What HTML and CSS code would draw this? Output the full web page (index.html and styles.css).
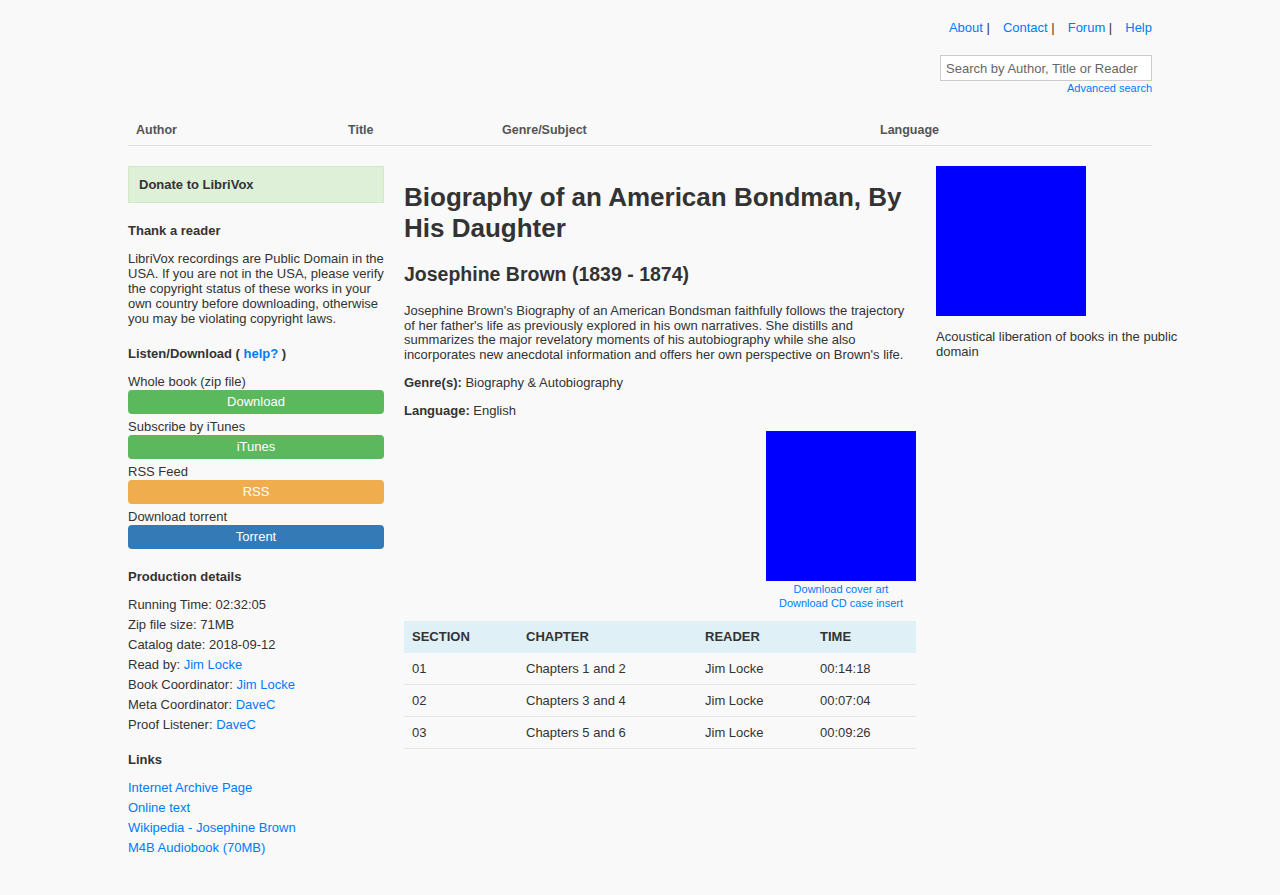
FILE: index.html
```html
<!DOCTYPE html>
<html lang="en">
<head>
<meta charset="utf-8">
<title>Biography of an American Bondman, By His Daughter - LibriVox</title>
<link rel="stylesheet" href="styles.css">
</head>
<body>
<div class="page">
  <header class="masthead">
    <ul class="toplinks">
      <li><a href="#">About</a> |</li>
      <li><a href="#">Contact</a> |</li>
      <li><a href="#">Forum</a> |</li>
      <li><a href="#">Help</a></li>
    </ul>
    <div class="search">
      <input class="search-input" type="text" placeholder="Search by Author, Title or Reader">
      <a class="adv" href="#">Advanced search</a>
    </div>
    <nav class="browse">
      <span class="b-author">Author</span>
      <span class="b-title">Title</span>
      <span class="b-genre">Genre/Subject</span>
      <span class="b-lang">Language</span>
    </nav>
  </header>

  <div class="content">
    <aside class="sidebar">
      <div class="donate">Donate to LibriVox</div>
      <h4 class="side-h first-h">Thank a reader</h4>
      <p class="side-p">LibriVox recordings are Public Domain in the USA. If you are not in the USA, please verify the copyright status of these works in your own country before downloading, otherwise you may be violating copyright laws.</p>
      <h4 class="side-h">Listen/Download ( <a href="#">help?</a> )</h4>
      <div class="dl">
        <div class="dl-item"><div class="dl-label">Whole book (zip file)</div><a class="btn btn-green" href="#">Download</a></div>
        <div class="dl-item"><div class="dl-label">Subscribe by iTunes</div><a class="btn btn-green" href="#">iTunes</a></div>
        <div class="dl-item"><div class="dl-label">RSS Feed</div><a class="btn btn-orange" href="#">RSS</a></div>
        <div class="dl-item"><div class="dl-label">Download torrent</div><a class="btn btn-blue" href="#">Torrent</a></div>
      </div>
      <h4 class="side-h prod-h">Production details</h4>
      <dl class="details">
        <dd>Running Time: 02:32:05</dd>
        <dd>Zip file size: 71MB</dd>
        <dd>Catalog date: 2018-09-12</dd>
        <dd>Read by: <a href="#">Jim Locke</a></dd>
        <dd>Book Coordinator: <a href="#">Jim Locke</a></dd>
        <dd>Meta Coordinator: <a href="#">DaveC</a></dd>
        <dd>Proof Listener: <a href="#">DaveC</a></dd>
      </dl>
      <h4 class="side-h links-h">Links</h4>
      <ul class="links">
        <li><a href="#">Internet Archive Page</a></li>
        <li><a href="#">Online text</a></li>
        <li><a href="#">Wikipedia - Josephine Brown</a></li>
        <li><a href="#">M4B Audiobook (70MB)</a></li>
      </ul>
    </aside>

    <main class="main">
      <h1 class="title">Biography of an American Bondman, By His Daughter</h1>
      <h2 class="author">Josephine Brown (1839 - 1874)</h2>
      <p class="desc">Josephine Brown's Biography of an American Bondsman faithfully follows the trajectory of her father's life as previously explored in his own narratives. She distills and summarizes the major revelatory moments of his autobiography while she also incorporates new anecdotal information and offers her own perspective on Brown's life.</p>
      <p class="meta"><b>Genre(s):</b> Biography &amp; Autobiography</p>
      <p class="meta"><b>Language:</b> English</p>
      <div class="cover-wrap">
        <div class="cover">
          <div class="cover-img"></div>
          <a href="#">Download cover art</a>
          <a href="#">Download CD case insert</a>
        </div>
      </div>
      <table class="chapters">
        <thead>
          <tr><th class="c1">Section</th><th class="c2">Chapter</th><th class="c3">Reader</th><th class="c4">Time</th></tr>
        </thead>
        <tbody>
          <tr><td>01</td><td>Chapters 1 and 2</td><td>Jim Locke</td><td>00:14:18</td></tr>
          <tr><td>02</td><td>Chapters 3 and 4</td><td>Jim Locke</td><td>00:07:04</td></tr>
          <tr><td>03</td><td>Chapters 5 and 6</td><td>Jim Locke</td><td>00:09:26</td></tr>
        </tbody>
      </table>
    </main>

    <aside class="right">
      <div class="logo-img"></div>
      <p class="tagline">Acoustical liberation of books in the public domain</p>
    </aside>
  </div>
</div>
</body>
</html>
```

FILE: styles.css
```css
* { box-sizing: border-box; }
html, body { margin: 0; padding: 0; }
body {
  background: #f9f9f9;
  color: #333;
  font-family: "Liberation Sans", Arial, sans-serif;
  font-size: 13px;
  line-height: 15px;
}
a { color: #007bff; text-decoration: none; }

.page { width: 1024px; margin: 0 auto; }

/* header */
.masthead { padding-top: 20px; }
.toplinks {
  list-style: none; margin: 0; padding: 0;
  display: flex; justify-content: flex-end;
  line-height: 15px;
}
.toplinks li { margin-left: 13px; }
.search {
  margin-top: 20px;
  display: flex; flex-direction: column; align-items: flex-end;
}
.search-input {
  width: 212px; height: 26px;
  border: 1px solid #ccc; background: #fff;
  padding: 0 5px;
  font-family: "Liberation Sans", Arial, sans-serif;
  font-size: 13px; color: #333;
  outline: none;
}
.search-input::placeholder { color: #666; }
.adv { font-size: 11px; line-height: 13px; margin-top: 1px; }

.browse {
  margin-top: 17px;
  display: grid;
  grid-template-columns: 212px 154px 378px 280px;
  border-bottom: 1px solid #ddd;
  font-weight: bold; color: #555;
  font-size: 12.5px;
}
.browse span { padding: 11px 8px 7px; line-height: 15px; }

/* layout */
.content {
  margin-top: 20px;
  display: grid;
  grid-template-columns: 256px 512px 256px;
  column-gap: 20px;
  align-items: start;
}

/* sidebar */
.donate {
  background: #dff0d8;
  border: 1px solid #d0e9c6;
  padding: 10px;
  font-weight: bold;
  line-height: 15px;
}
.side-h { margin: 20px 0 0; font-size: 13px; line-height: 15px; }
.first-h { margin-top: 20px; }
.side-p { margin: 13px 0 0; }
.dl { margin-top: 13px; }
.dl-item { margin-bottom: 5px; }
.dl-label { line-height: 16px; }
.btn {
  display: block; height: 24px; line-height: 24px;
  text-align: center; color: #fff;
  border-radius: 4px;
}
.btn-green { background: #5cb85c; }
.btn-orange { background: #f0ad4e; }
.btn-blue { background: #337ab7; }
.prod-h { margin-top: 20px; }
.details { margin: 11px 0 0; }
.details dd { margin: 0; line-height: 20px; }
.links-h { margin-top: 17px; }
.links { list-style: none; margin: 11px 0 0; padding: 0; }
.links li { line-height: 20px; }

/* main */
.title {
  margin: 16px 0 0;
  font-size: 26px; line-height: 31px;
  font-weight: bold;
}
.author {
  margin: 19px 0 0;
  font-size: 19.5px; line-height: 23px;
}
.desc { margin: 18px 0 0; line-height: 14.7px; }
.meta { margin: 12px 0 0; line-height: 15px; }
.meta + .meta { margin-top: 13px; }
.cover-wrap { display: flex; justify-content: flex-end; margin-top: 13px; }
.cover {
  width: 150px;
  display: flex; flex-direction: column; align-items: center;
  font-size: 11px; line-height: 14px;
}
.cover-img { width: 150px; height: 150px; background: #0000ff; margin-bottom: 1px; }

.chapters {
  margin-top: 11px;
  width: 512px;
  border-collapse: collapse;
  table-layout: fixed;
}
.chapters th, .chapters td {
  text-align: left;
  padding: 0 8px;
  height: 32px;
  line-height: 15px;
}
.chapters th {
  background: #dff0f7;
  text-transform: uppercase;
  font-weight: bold;
}
.chapters td { border-bottom: 1px solid #e6e6e6; }
.chapters .c1 { width: 114px; }
.chapters .c2 { width: 179px; }
.chapters .c3 { width: 115px; }
.chapters .c4 { width: 104px; }

/* right */
.logo-img { width: 150px; height: 150px; background: #0000ff; }
.tagline { margin: 13px 0 0; line-height: 15px; }
```
